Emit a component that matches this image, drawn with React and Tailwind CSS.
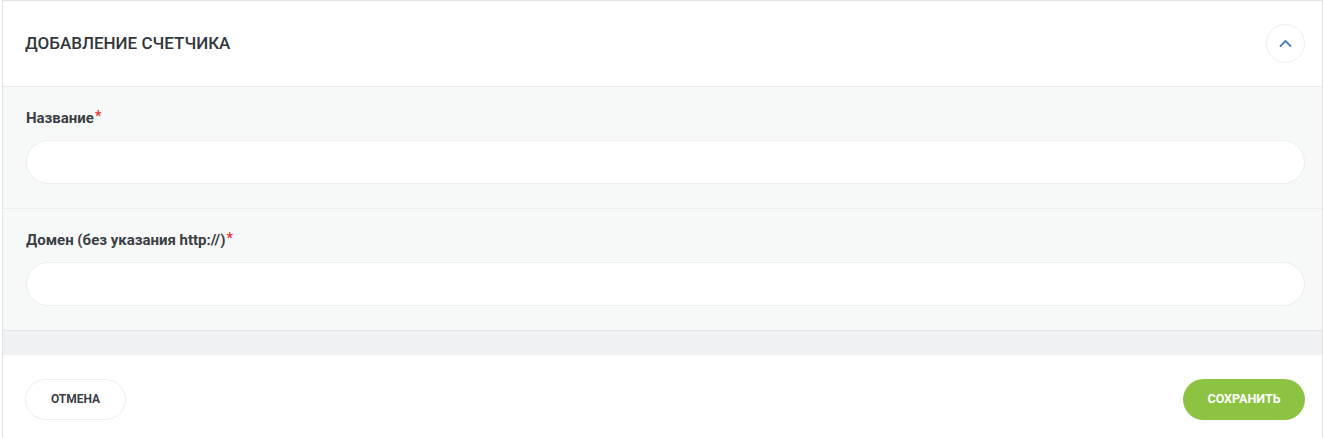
import React from "react";

const Field = ({ label, last = false }) => (
    <div
        className={`pl-[23px] pr-[17px] pt-[22px] pb-[24px] bg-[#f7f8f8] ${last ? "border-b border-[#e3e5e6]" : "border-b border-[#eceeef]"}`}
    >
        <label className="block text-[15px] font-bold text-[#3a3f45] leading-[18px] mb-[13px]">
            {label}
            <span className="relative -top-[2px] text-[#e53935] text-[14px] ml-[1px]">*</span>
        </label>
        <input
            type="text"
            className="block w-full h-[44px] rounded-full bg-white border border-[#eceeef] outline-none px-5"
        />
    </div>
);

export default function App() {
    return (
        <div className="w-[1324px] h-[438px] bg-white pl-[2px] pr-[1px]" style={{ fontFamily: "Roboto, 'Liberation Sans', sans-serif" }}>
            <div className="h-full border-l border-r border-t border-[#e1e3e4] flex flex-col">
                <div className="h-[86px] flex items-center justify-between pl-[22px] pr-[17px] border-b border-[#e8eaeb]">
                    <h2 className="text-[17px] font-medium text-[#33373c] uppercase">
                        Добавление счетчика
                    </h2>
                    <button className="w-[39px] h-[39px] rounded-full border border-[#eceeef] bg-white flex items-center justify-center">
                        <svg width="13" height="9" viewBox="0 0 13 9" fill="none">
                            <path d="M1.5 7 L6.5 2 L11.5 7" stroke="#4a7fc1" strokeWidth="1.8" strokeLinecap="round" strokeLinejoin="round" />
                        </svg>
                    </button>
                </div>
                <Field label="Название" />
                <Field label="Домен (без указания http://)" last />
                <div className="h-[24px] bg-[#f0f1f2]" />
                <div className="flex-1 flex items-center justify-between pl-[22px] pr-[17px] pt-[5px]">
                    <button className="h-[41px] w-[101px] rounded-full border border-[#eceeef] bg-white text-[12px] font-bold text-[#3a3f45] uppercase">
                        Отмена
                    </button>
                    <button className="h-[41px] w-[122px] rounded-full bg-[#8cc342] text-[12.5px] font-bold text-white uppercase">
                        Сохранить
                    </button>
                </div>
            </div>
        </div>
    );
}
